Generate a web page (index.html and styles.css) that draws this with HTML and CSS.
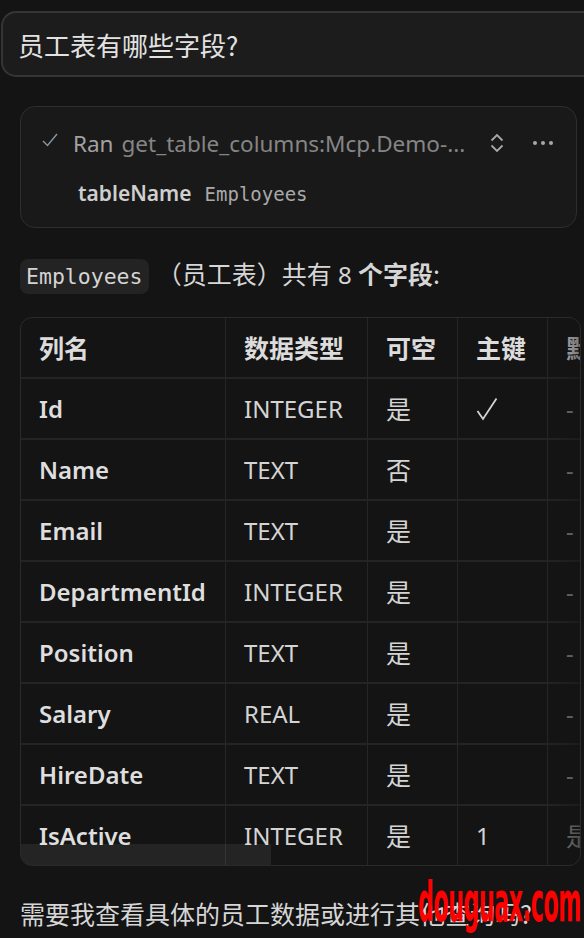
FILE: index.html
```html
<!DOCTYPE html>
<html lang="zh-CN">
<head>
<meta charset="utf-8">
<title>Chat</title>
<link rel="stylesheet" href="styles.css">
</head>
<body>
<div class="chat">
  <div class="prompt">员工表有哪些字段?</div>

  <div class="tool">
    <div class="tool-head">
      <svg class="check" width="18" height="18" viewBox="0 0 18 18"><path d="M2 10 L6.5 14.5 L16 3" fill="none" stroke="#8996a4" stroke-width="1.4"/></svg>
      <span class="ran">Ran</span>
      <span class="tool-name">get_table_columns:Mcp.Demo-...</span>
      <svg class="chev" width="16" height="22" viewBox="0 0 16 22"><path d="M2.5 8.5 L8 3 L13.5 8.5 M2.5 13.5 L8 19 L13.5 13.5" fill="none" stroke="#a8a8a8" stroke-width="1.8"/></svg>
      <svg class="dots" width="22" height="6" viewBox="0 0 22 6"><circle cx="3" cy="3" r="2" fill="#a8a8a8"/><circle cx="11" cy="3" r="2" fill="#a8a8a8"/><circle cx="19" cy="3" r="2" fill="#a8a8a8"/></svg>
    </div>
    <div class="tool-params">
      <span class="pname">tableName</span>
      <span class="pval">Employees</span>
    </div>
  </div>

  <p class="summary"><code class="chip">Employees</code> <span class="cjk">（员工表）共有</span> <span class="num">8</span> <b class="cjk">个字段</b><span class="cjk">:</span></p>

  <div class="table-wrap">
    <table class="cols">
      <colgroup>
        <col class="c1"><col class="c2"><col class="c3"><col class="c4"><col class="c5">
      </colgroup>
      <thead>
        <tr><th>列名</th><th>数据类型</th><th>可空</th><th>主键</th><th>默认值</th></tr>
      </thead>
      <tbody>
        <tr><td class="name">Id</td><td class="type">INTEGER</td><td class="cjk">是</td><td class="pk"><svg class="tick" width="22" height="24" viewBox="0 0 22 24"><path d="M1.5 14 L7 22 L20.5 1.5" fill="none" stroke="#d4d4d4" stroke-width="1.8"/></svg></td><td class="def">-</td></tr>
        <tr><td class="name">Name</td><td class="type">TEXT</td><td class="cjk">否</td><td></td><td class="def">-</td></tr>
        <tr><td class="name">Email</td><td class="type">TEXT</td><td class="cjk">是</td><td></td><td class="def">-</td></tr>
        <tr><td class="name">DepartmentId</td><td class="type">INTEGER</td><td class="cjk">是</td><td></td><td class="def">-</td></tr>
        <tr><td class="name">Position</td><td class="type">TEXT</td><td class="cjk">是</td><td></td><td class="def">-</td></tr>
        <tr><td class="name">Salary</td><td class="type">REAL</td><td class="cjk">是</td><td></td><td class="def">-</td></tr>
        <tr><td class="name">HireDate</td><td class="type">TEXT</td><td class="cjk">是</td><td></td><td class="def">-</td></tr>
        <tr><td class="name">IsActive</td><td class="type">INTEGER</td><td class="cjk">是</td><td class="type">1</td><td class="cjk def">是</td></tr>
      </tbody>
    </table>
    <div class="fade"></div>
    <div class="thumb"></div>
  </div>

  <p class="follow">需要我查看具体的员工数据或进行其他查询吗?</p>
  <div class="watermark">douguax.com</div>
</div>
</body>
</html>
```

FILE: styles.css
```css
html, body {
  margin: 0;
  padding: 0;
  background: #141414;
  overflow: hidden;
}

body {
  width: 584px;
  height: 938px;
  color: #d6d6d6;
  font-family: "Noto Sans", "Noto Sans CJK SC", sans-serif;
}

.chat {
  position: relative;
  height: 938px;
  padding-top: 11px;
  box-sizing: border-box;
}

.prompt {
  margin: 0 -40px 0 1px;
  height: 66px;
  box-sizing: border-box;
  border: 2px solid #353535;
  border-radius: 15px;
  background: #1c1c1c;
  display: flex;
  align-items: center;
  padding-left: 15px;
  font-family: "Noto Sans CJK SC", sans-serif;
  font-size: 26px;
  color: #e2e2e2;
}

.tool {
  margin: 29px 7px 0 20px;
  height: 122px;
  box-sizing: border-box;
  border: 1.5px solid #2e2e2e;
  border-radius: 15px;
  background: #191919;
}

.tool-head {
  display: flex;
  align-items: center;
  height: 32px;
  margin-top: 20px;
  padding-left: 20px;
  padding-right: 22px;
  font-size: 22.5px;
}

.check {
  flex: none;
  margin-right: 14px;
  margin-top: -6px;
}

.ran {
  color: #a2a2a2;
  margin-right: 8px;
}

.tool-name {
  color: #858585;
  flex: 1;
  white-space: nowrap;
}

.chev {
  flex: none;
  margin-right: 27px;
}

.dots {
  flex: none;
}

.tool-params {
  display: flex;
  align-items: baseline;
  margin-top: 20px;
  padding-left: 57px;
}

.pname {
  font-weight: 600;
  font-size: 21px;
  color: #cfcfcf;
  margin-right: 13px;
}

.pval {
  font-family: "DejaVu Sans Mono", monospace;
  font-size: 19px;
  color: #a9a9a9;
}

.summary {
  margin: 28px 0 0 20px;
  height: 34px;
  line-height: 34px;
  font-size: 24px;
  white-space: nowrap;
}

.chip {
  font-family: "DejaVu Sans Mono", monospace;
  font-size: 21.5px;
  background: #232323;
  color: #d4d4d4;
  border-radius: 8px;
  padding: 5px 6px;
  margin-right: 2px;
}

.cjk {
  font-family: "Noto Sans CJK SC", sans-serif;
  font-size: 25px;
}

.num {
  font-size: 24px;
}

.summary b {
  font-weight: 700;
}

.table-wrap {
  position: relative;
  margin: 27px 0 0 20px;
  width: 561px;
  box-sizing: border-box;
  border: 1.5px solid #2a2a2a;
  border-radius: 12px;
  overflow: hidden;
}

.cols {
  border-collapse: separate;
  border-spacing: 0;
  table-layout: fixed;
  width: 660px;
}

.c1 { width: 205px; }
.c2 { width: 142px; }
.c3 { width: 90px; }
.c4 { width: 90px; }
.c5 { width: 133px; }

.cols th,
.cols td {
  padding: 0 0 0 18px;
  height: 59px;
  line-height: 59px;
  text-align: left;
  white-space: nowrap;
  border-bottom: 2px solid #242424;
  border-right: 1.5px solid #262626;
  color: #d4d4d4;
  font-size: 24px;
}

.cols tbody tr:last-child td {
  border-bottom: none;
}

.cols th {
  font-family: "Noto Sans CJK SC", sans-serif;
  font-weight: 700;
  font-size: 25px;
  color: #dcdcdc;
}

.cols td.name {
  font-weight: 600;
  color: #dedede;
}

.cols td.cjk {
  font-size: 25px;
}

.tick {
  vertical-align: middle;
  margin-top: -6px;
}

.cols td.def {
  color: #8a8a8a;
}

.fade {
  position: absolute;
  top: 0;
  right: 0;
  width: 36px;
  height: 100%;
  background: linear-gradient(to right, rgba(20, 20, 20, 0), rgba(20, 20, 20, 0.5));
  pointer-events: none;
}

.thumb {
  position: absolute;
  left: 0;
  bottom: 0;
  width: 250px;
  height: 21px;
  background: rgba(255, 255, 255, 0.07);
  pointer-events: none;
}

.follow {
  margin: 29px 0 0 20px;
  font-family: "Noto Sans CJK SC", sans-serif;
  font-size: 25px;
  color: #d6d6d6;
  white-space: nowrap;
}

.watermark {
  position: absolute;
  left: 418px;
  top: 869px;
  font-family: "DejaVu Sans Condensed", "DejaVu Sans", sans-serif;
  font-weight: 700;
  font-size: 56px;
  letter-spacing: -1px;
  color: #ff0000;
  transform: scaleX(0.44);
  transform-origin: left top;
  white-space: nowrap;
}
```
